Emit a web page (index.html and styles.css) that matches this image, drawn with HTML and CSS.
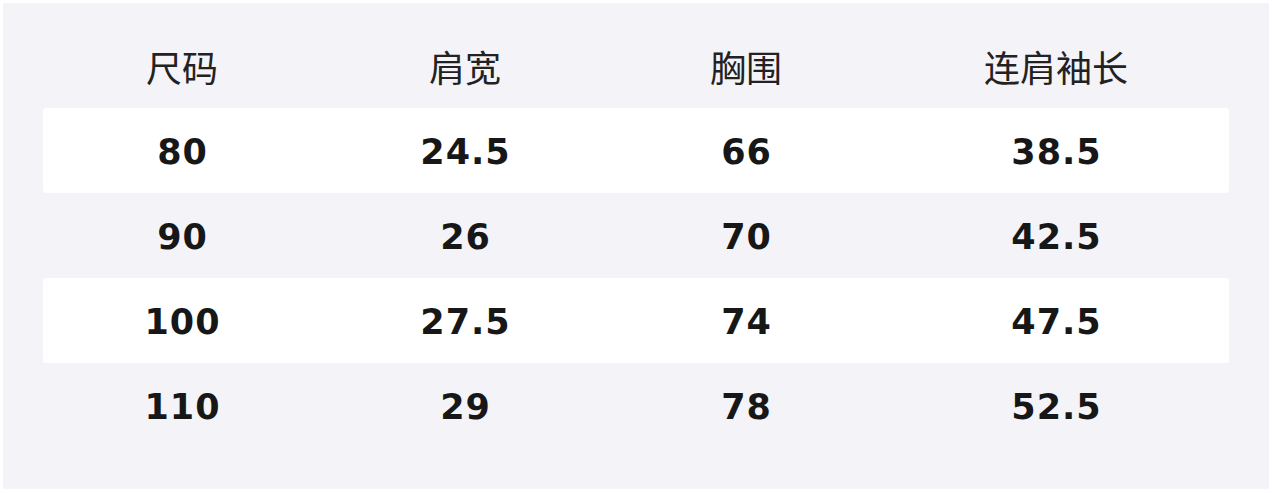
FILE: index.html
```html
<!DOCTYPE html>
<html lang="zh">
<head>
<meta charset="utf-8">
<link rel="stylesheet" href="styles.css">
</head>
<body>
<div class="panel">
  <div class="table">
    <div class="row head">
      <div class="cell">尺码</div>
      <div class="cell">肩宽</div>
      <div class="cell">胸围</div>
      <div class="cell">连肩袖长</div>
    </div>
    <div class="row odd">
      <div class="cell">80</div>
      <div class="cell">24.5</div>
      <div class="cell">66</div>
      <div class="cell">38.5</div>
    </div>
    <div class="row">
      <div class="cell">90</div>
      <div class="cell">26</div>
      <div class="cell">70</div>
      <div class="cell">42.5</div>
    </div>
    <div class="row odd">
      <div class="cell">100</div>
      <div class="cell">27.5</div>
      <div class="cell">74</div>
      <div class="cell">47.5</div>
    </div>
    <div class="row">
      <div class="cell">110</div>
      <div class="cell">29</div>
      <div class="cell">78</div>
      <div class="cell">52.5</div>
    </div>
  </div>
</div>
</body>
</html>
```

FILE: styles.css
```css
html, body {
  margin: 0;
  padding: 0;
  background: #ffffff;
}
body {
  padding: 3px;
  width: 1266px;
  height: 486px;
}
.panel {
  box-sizing: border-box;
  width: 1266px;
  height: 486px;
  background: #f3f3f8;
  border-radius: 2px;
  padding: 20px 40px 0 40px;
}
.table {
  display: flex;
  flex-direction: column;
}
.row {
  display: grid;
  grid-template-columns: 278px 288px 274px 346px;
  height: 85px;
  align-items: center;
  border-radius: 3px;
}
.row.odd {
  background: #ffffff;
}
.cell {
  text-align: center;
  font-family: "DejaVu Sans", sans-serif;
  font-weight: bold;
  font-size: 35px;
  letter-spacing: 1px;
  text-indent: 1px;
  color: #171717;
  line-height: 1;
  padding-top: 3px;
}
.head .cell {
  font-family: "Noto Sans CJK SC", sans-serif;
  font-weight: normal;
  font-size: 36px;
  letter-spacing: 0;
  text-indent: 0;
  color: #222222;
  padding-top: 0;
}
```
